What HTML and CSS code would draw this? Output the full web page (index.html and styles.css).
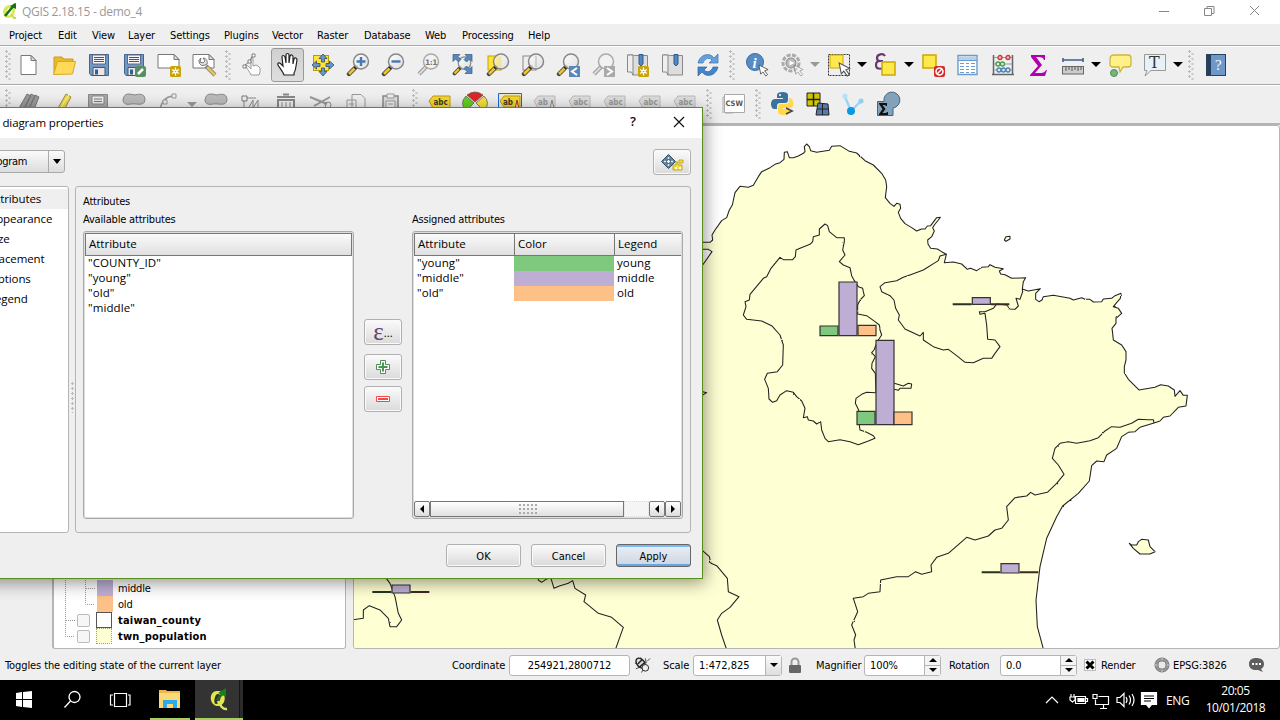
FILE: index.html
```html
<!DOCTYPE html>
<html lang="en">
<head>
<meta charset="utf-8">
<title>QGIS 2.18.15 - demo_4</title>
<link rel="stylesheet" href="styles.css">
</head>
<body>
<svg class="defs" width="0" height="0">
  <defs>
    <linearGradient id="lens" x1="0" y1="0" x2="1" y2="1"><stop offset="0" stop-color="#fff"/><stop offset="1" stop-color="#dcdcdc"/></linearGradient>
    <filter id="rough" x="-5%" y="-5%" width="110%" height="110%"><feTurbulence type="fractalNoise" baseFrequency=".06" numOctaves="2" seed="4" result="n"/><feDisplacementMap in="SourceGraphic" in2="n" scale="5" xChannelSelector="R" yChannelSelector="G"/></filter>
    <symbol id="mag" viewBox="0 0 24 24"><path d="M10 14 3 21" stroke="#444" stroke-width="4.4" stroke-linecap="round"/><path d="M9.500 14.500 3 21" stroke="#f2c32c" stroke-width="2.600"/><path d="m11 13-2.500 2.500" stroke="#222" stroke-width="3"/><circle cx="15" cy="8.500" r="7.500" fill="url(#lens)" fill-opacity=".85" stroke="#888" stroke-width="1.500"/></symbol>
    <symbol id="maggray" viewBox="0 0 24 24"><path d="M10 14 3 21" stroke="#999" stroke-width="4"/><path d="M9.500 14.500 3 21" stroke="#ddd" stroke-width="2"/><circle cx="15" cy="8.500" r="7.500" fill="#f2f2f2" stroke="#aaa" stroke-width="1.500"/></symbol>
    <symbol id="floppy" viewBox="0 0 24 24"><path d="M2.500 1.500h19v21H4l-1.500-2z" fill="#6f98c6" stroke="#44658c"/><path d="M5.500 2h13v9h-13z" fill="#f5f5f5" stroke="#668"/><path d="M7 4.500h10M7 6.500h10M7 8.500h10" stroke="#555"/><path d="M6 14.500h12v8H6z" fill="#e8e8e8" stroke="#456"/><path d="M8 16.500h3v5H8z" fill="#345f92"/></symbol>
    <symbol id="star" viewBox="0 0 11 11"><rect width="11" height="11" rx="1.500" fill="#c9a30a"/><path d="M5.500 1.500v8M2 3.500l7 4M9 3.500l-7 4" stroke="#fff" stroke-width="1.300"/><circle cx="5.500" cy="5.500" r="2" fill="#fff"/><circle cx="5.500" cy="5.500" r=".8" fill="#c9a30a"/></symbol>
    <symbol id="cursor" viewBox="0 0 12 14"><path d="m1 1 2 10 2.300-2.500 3.200 4.500 2-1.500-3.200-4.200L11 6z" fill="#fff" stroke="#555"/></symbol>
    <symbol id="book" viewBox="0 0 24 24"><path d="M1.500 2h5v20h15V2.500h-13L7 2" fill="#ddd" stroke="#888"/><path d="M1.500 2v17h4l1.500 3V2z" fill="#eee" stroke="#888"/><path d="M13 1.500h4V11l-2 2-2-2z" fill="#5586c0" stroke="#2d5b94"/></symbol>
    <symbol id="tag" viewBox="0 0 24 24"><path d="m1 9 4-5h17v12H5z" fill="#ddd" stroke="#bbb"/></symbol>
  </defs>
</svg>
<div class="desktop">
  <header class="titlebar">
    <svg class="logo" viewBox="0 0 16 18"><path d="M8 3C3 3 1 7 1 10s2 6 5 6c5 0 7-4 7-8S11 3 8 3m0 3c2 0 3 1 2 4s-3 4-4 3-1-3-1-4 1-3 3-3" fill="#dbe75b" fill-rule="evenodd"/><path d="m9 12 3 4h2" stroke="#cddb40" stroke-width="2" fill="none"/><path d="M3 14 13 2" stroke="#14721c" stroke-width="2.500"/><path d="m8 4 6-3 0 6z" fill="#14721c"/></svg>
    <span class="wtitle">QGIS 2.18.15 - demo_4</span>
    <svg class="wctl" viewBox="0 0 120 24" fill="none" stroke="#888"><path d="M9 11.500h10M54.500 8.500h7v7h-7zM57 8V6.500h7v7H62M100 6l9 9M109 6l-9 9"/></svg>
  </header>
  <nav class="menubar"><span style="width:49px">Project</span><span style="width:34px">Edit</span><span style="width:36px">View</span><span style="width:42px">Layer</span><span style="width:54px">Settings</span><span style="width:48px">Plugins</span><span style="width:45px">Vector</span><span style="width:47px">Raster</span><span style="width:61px">Database</span><span style="width:37px">Web</span><span style="width:66px">Processing</span><span>Help</span></nav>

  <div class="toolbar">
    <i class="grip first"></i>
    <span class="tool"><svg viewBox="0 0 24 24"><path d="M4 2.500h10l5 5v14H4z" fill="#fff" stroke="#777"/><path d="M14 2.500v5h5z" fill="#ddd" stroke="#777"/></svg></span>
    <span class="tool"><svg viewBox="0 0 24 24"><path d="M2 21V4h8l2 2h9v4" fill="#e9b927" stroke="#c99b20"/><path d="m1.500 21.500 4-13h18l-3 12.500z" fill="#ffda58" stroke="#d9a72c"/></svg></span>
    <span class="tool"><svg><use href="#floppy"/></svg></span>
    <span class="tool"><svg viewBox="0 0 24 24"><use href="#floppy" width="24" height="24"/><rect x="13" y="13" width="11" height="11" rx="2" fill="#55915e"/><path d="m16 21 5-5" stroke="#fff" stroke-width="2.500"/></svg></span>
    <span class="tool"><svg viewBox="0 0 24 24"><path d="M1 1.500h16l5 5V15H1z" fill="#fff" stroke="#777"/><path d="M17 1.500v5h5z" fill="#ddd" stroke="#777"/><use href="#star" x="13" y="13" width="11" height="11"/></svg></span>
    <span class="tool"><svg viewBox="0 0 24 24"><path d="M1 1.500h16l5 5V15H1z" fill="#fff" stroke="#777"/><path d="M17 1.500v5h5z" fill="#ddd" stroke="#777"/><path d="m14 13 9 9" stroke="#777" stroke-width="4"/><path d="m15 14 8 8" stroke="#e6c753" stroke-width="2.500"/><path d="M9 5a4 4 0 1 0 4 7l2-1c1-3-1-6-4-6l2 3-2 2-3-1z" fill="#e4e4e4" stroke="#777"/></svg></span>
    <i class="grip"></i>
    <span class="tool"><svg viewBox="0 0 24 24"><path d="M10 22c-1-3-4-6-5-9 0-1 1-1 2 0l3 3V6c0-2 2-2 2 0v7l3-1 2 1 2 2v4l-1 3z" fill="#fff" stroke="#999"/><path d="m3 13 6-5 3-6" stroke="#777" fill="none"/><path d="M11 1h3v3h-3zM7 7h3v3H7zM2 12h3v3H2z" stroke="#555" fill="#fff" stroke-width=".7"/></svg></span>
    <span class="tool pressed"><svg viewBox="0 0 24 24"><path d="M8 22c-1-3-5-8-6-10s1-3 3-1l2 2L6 4c0-2 2-2 3 0l1 6V2c0-2 3-2 3 0v8l1-7c1-2 3-1 3 1v7l1-5c1-2 3-1 3 1-1 5-1 10-3 13v2z" fill="#fff" stroke="#222" stroke-width="1.200"/></svg></span>
    <span class="tool"><svg viewBox="0 0 24 24"><rect x="2.500" y="2.500" width="15" height="15" fill="#ffe338" stroke="#b99c00"/><path d="M12 1 8 5.500h2.500V9h3V5.500H16zM12 23l-4-4.500h2.500V15h3v3.500H16zM1 12l4.500-4v2.500H9v3H5.500V16zM23 12l-4.500-4v2.500H15v3h3.500V16z" fill="#6c98c8" stroke="#294d79" stroke-width=".8"/></svg></span>
    <span class="tool"><svg viewBox="0 0 24 24"><use href="#mag" width="24" height="24"/><path d="M15 4v9M10.500 8.500h9" stroke="#4778ae" stroke-width="2.400"/></svg></span>
    <span class="tool"><svg viewBox="0 0 24 24"><use href="#mag" width="24" height="24"/><path d="M10.500 8.500h9" stroke="#4778ae" stroke-width="2.400"/></svg></span>
    <span class="tool"><svg viewBox="0 0 24 24"><use href="#maggray" width="24" height="24"/><text x="9" y="11.500" class="i-one">1:1</text></svg></span>
    <span class="tool"><svg viewBox="0 0 24 24"><use href="#mag" x="1" y="3" width="20" height="20"/><path d="M2 1.500h7L7 3.500l3 3L7.500 9l-3-3L2 8.500zM21 1.500h-7l2 2-3 3L15.500 9l3-3L21 8.500zM21 20.500h-7l2-2-3-3 2.500-2.500 3 3 2.500-2.500z" fill="#5b88ba" stroke="#315c8a" stroke-width=".7"/></svg></span>
    <span class="tool"><svg viewBox="0 0 24 24"><rect x="2" y="3" width="13" height="14" fill="#ffe338" stroke="#c8a300"/><use href="#mag" width="24" height="24"/><path d="M11 3.500h4v10h-4q-3-5 0-10" fill="#f3e27a" opacity=".6"/></svg></span>
    <span class="tool"><svg viewBox="0 0 24 24"><rect x="2" y="3" width="13" height="14" fill="#eee" stroke="#888"/><use href="#mag" width="24" height="24"/><path d="M15 3v11" stroke="#bbb"/></svg></span>
    <span class="tool"><svg viewBox="0 0 24 24"><use href="#mag" width="24" height="24"/><rect x="13" y="13" width="11" height="11" fill="#5888bd"/><path d="m21 15-5 3.500 5 3.500" fill="none" stroke="#fff" stroke-width="2"/></svg></span>
    <span class="tool"><svg viewBox="0 0 24 24"><use href="#maggray" width="24" height="24"/><rect x="13" y="13" width="11" height="11" fill="#aaa"/><path d="m16 15 5 3.500-5 3.500" fill="none" stroke="#fff" stroke-width="2"/></svg></span>
    <span class="tool"><svg viewBox="0 0 24 24"><use href="#book" width="24" height="24"/><use href="#star" x="12" y="13" width="11" height="11"/></svg></span>
    <span class="tool"><svg><use href="#book"/></svg></span>
    <span class="tool"><svg viewBox="0 0 24 24"><path d="M2 10C4 1 14-1 18 5l4-4v9h-9l3-3c-4-4-8 0-9 3z" fill="#67a1dc" stroke="#3772b1" stroke-width=".7"/><path d="M22 14c-2 9-12 11-16 5l-4 4v-9h9l-3 3c4 4 8 0 9-3z" fill="#4385c7" stroke="#2b64a3" stroke-width=".7"/></svg></span>
    <i class="grip"></i>
    <span class="tool"><svg viewBox="0 0 24 24"><circle cx="10" cy="9" r="8.500" fill="#568bc4" stroke="#3e6da0"/><text x="7.500" y="14.500" class="i-info">i</text><use href="#cursor" x="13" y="11" width="11" height="13"/></svg></span>
    <span class="tool"><svg viewBox="0 0 24 24"><circle cx="11" cy="10" r="8" fill="#eee" stroke="#aaa" stroke-width="3" stroke-dasharray="4 1.500"/><circle cx="11" cy="10" r="5" fill="#bbb" stroke="#888"/><path d="m9.500 7.500 5 2.500-5 2.500z" fill="#fff"/><g opacity=".5"><use href="#cursor" x="13" y="11" width="11" height="13"/></g></svg></span>
    <b class="drop dim"></b>
    <span class="tool"><svg viewBox="0 0 24 24"><rect x="1.500" y="1.500" width="21" height="21" fill="none" stroke="#333" stroke-dasharray="2 1"/><path d="M3 2h13v13H3z" fill="#ffe84d" stroke="#caa900"/><use href="#cursor" x="11" y="9" width="13" height="15"/></svg></span>
    <b class="drop"></b>
    <span class="tool"><svg viewBox="0 0 24 24"><path d="M11 3C9 0 3 1 3 5c0 2 1 3 3 3-3 0-4 2-4 4 0 5 8 5 9 0M6 8h3" fill="none" stroke="#66386f" stroke-width="2.200"/><rect x="8" y="9" width="13" height="13" fill="#ffe84d" stroke="#caa900" stroke-width="1.500"/></svg></span>
    <b class="drop"></b>
    <span class="tool"><svg viewBox="0 0 24 24"><path d="M2 2h13v13H2z" fill="#ffe84d" stroke="#caa900" stroke-width="1.500"/><rect x="13" y="13" width="11" height="11" rx="2" fill="#d7282c"/><circle cx="18.500" cy="18.500" r="3.500" fill="none" stroke="#fff" stroke-width="1.500"/><path d="m16 21 5-5" stroke="#fff" stroke-width="1.500"/></svg></span>
    <span class="tool"><svg viewBox="0 0 24 24"><path d="M2 2.500h19v19H2z" fill="#fff" stroke="#6b9ccb" stroke-width="1.400"/><path d="M3 3.500h17v4H3z" fill="#b5d1ec"/><path d="M2 7.500h19M4 10.500h4M10 10.500h3M15 10.500h4M4 13.500h4M10 13.500h3M15 13.500h4M4 16.500h4M10 16.500h3M15 16.500h4M4 19.500h4M10 19.500h3M15 19.500h4" stroke="#6b9ccb"/></svg></span>
    <span class="tool"><svg viewBox="0 0 24 24"><path d="M2.500 2v19M21.500 2v19M1 21.500h22" stroke="#666" stroke-width="1.500"/><path d="M3 4.500h18M3 11h18M3 17h18" stroke="#999"/><g stroke-width="1.300"><g fill="#f6b8b8" stroke="#c63b3b"><circle cx="9" cy="4.500" r="2"/><circle cx="17" cy="4.500" r="2"/></g><g fill="#d7f4d6" stroke="#4a9a4e"><circle cx="7" cy="11" r="2"/><circle cx="11.500" cy="11" r="2"/></g><g fill="#d8e7f6" stroke="#4d82b5"><circle cx="8" cy="17" r="2"/><circle cx="12.500" cy="17" r="2"/><circle cx="17" cy="17" r="2"/></g></g></svg></span>
    <span class="tool"><svg viewBox="0 0 24 24"><path d="M5 2h14v5h-1c-1-3-3-3-8-3l6 8-7 8h5c4 0 5-1 6-3h1l-2 6H4v-1l8-9-7-9z" fill="#b000af"/></svg></span>
    <span class="tool"><svg viewBox="0 0 24 24"><path d="M1.500 7h21M2 5v4M22 5v4" stroke="#3f608c" stroke-width="1.600"/><rect x="1.500" y="13.500" width="21" height="7.500" fill="#ccc" stroke="#666"/><path d="M5 14v4M8 14v3M11 14v4M14 14v3M17 14v4M20 14v3" stroke="#555"/></svg></span>
    <b class="drop"></b>
    <span class="tool"><svg viewBox="0 0 24 24"><path d="M6 2h14q3 0 3 3v6q0 3-3 3h-5l-3 5-1-5H5q-3 0-3-3V6q0-4 4-4" fill="#fff08a" stroke="#cdb53b" stroke-width="1.300"/><circle cx="6" cy="20" r="3.500" fill="#76b47b" stroke="#528a57"/></svg></span>
    <span class="tool"><svg viewBox="0 0 24 24"><path d="M1.500 1.500h21v16H8L2 23l2-5.500H1.500z" fill="#e8f1f6" stroke="#999"/><text x="6" y="15" class="i-t">T</text></svg></span>
    <b class="drop"></b>
    <i class="grip"></i>
    <span class="tool"><svg viewBox="0 0 24 24"><rect x="2.500" y="1.500" width="19" height="21" fill="#6c98cb" stroke="#26435f"/><path d="M3 2h4v20H3z" fill="#263f56"/><text x="11" y="17" class="i-help">?</text></svg></span>
  </div>

  <div class="toolbar second">
    <i class="grip first"></i>
    <span class="tool"><svg viewBox="0 0 24 24"><path d="M1 18 10 2l4 2-8 15M6 19 14 2l4 2-7 15M11 19l7-16 4 2-6 15" fill="#999" stroke="#777"/></svg></span>
    <span class="tool"><svg viewBox="0 0 24 24"><path d="m5 18 9-16 5 3-8 15-6 3z" fill="#efd94d" stroke="#9e8c36"/><path d="m8 17 9-14" stroke="#fff6b4"/></svg></span>
    <span class="tool"><svg viewBox="0 0 24 24"><path d="M1.500 2.500h19v19h-19z" fill="#aaa" stroke="#888"/><path d="M5 4h12v8H5z" fill="#eee" stroke="#888"/><path d="M7 7h8M7 9.500h8" stroke="#777"/></svg></span>
    <span class="tool"><svg viewBox="0 0 24 24"><path d="M1 8C2 0 8 2 13 3c7-2 10 0 10 5-1 7-9 3-14 4-4 1-8 0-8-4M13 18h10" fill="#bbb" stroke="#888"/></svg></span>
    <span class="tool"><svg viewBox="0 0 24 24"><path d="M3 18Q5 5 16 4" fill="none" stroke="#999" stroke-width="1.500"/><path d="M15 2h4v4h-4zM6 8h4v4H6z" fill="#eee" stroke="#999"/></svg></span>
    <b class="drop dim"></b>
    <span class="tool"><svg viewBox="0 0 24 24"><path d="M1 8C2 0 8 2 13 3c7-2 10 0 10 5-1 7-9 3-14 4-4 1-8 0-8-4M13 18h10" fill="#bbb" stroke="#888"/></svg></span>
    <span class="tool"><svg viewBox="0 0 24 24"><path d="M5 18V6h12M9 17l5-9 0 8 5-8v8" fill="none" stroke="#888"/><path d="M3 4h5v5H3z" fill="#eee" stroke="#777"/></svg></span>
    <span class="tool"><svg viewBox="0 0 24 24"><path d="M4 8h16v14H4zM3 5h18M9 2.500h6" fill="none" stroke="#888" stroke-width="2"/><path d="M8 10v10M12 10v10M16 10v10" stroke="#888"/></svg></span>
    <span class="tool"><svg viewBox="0 0 24 24"><path d="m1 5 17 7M5 14l16-9" stroke="#999" stroke-width="2"/><circle cx="19" cy="13" r="3" fill="none" stroke="#888"/></svg></span>
    <span class="tool"><svg viewBox="0 0 24 24"><path d="M8 2.500h9l4 4V20H8z M3 8h9v12H3zM5 12h5" fill="#eee" stroke="#999"/></svg></span>
    <span class="tool"><svg viewBox="0 0 24 24"><path d="M4 4h15v18H4z" fill="#ddd" stroke="#888" stroke-width="1.500"/><path d="M8 2h7v4H8zM7 9h9v9H7zM9 12h5" fill="#eee" stroke="#999"/></svg></span>
    <i class="grip"></i>
    <span class="tool"><svg viewBox="0 0 24 24"><path d="m1 9 4-5h17v12H5z" fill="#f4d82b" stroke="#b99a1b"/><text x="5.500" y="12.500" class="i-abc">abc</text></svg></span>
    <span class="tool"><svg viewBox="0 0 24 24"><g stroke="#555" stroke-width=".7"><path d="M12 10 4 3q8-6 16 0z" fill="#e32424"/><path d="M11 11 3 4q-7 7 0 15z" fill="#64d11d"/><path d="m13 11 8-7q7 7 0 15z" fill="#f5df3e"/></g></svg></span>
    <span class="tool"><svg viewBox="0 0 24 24"><path d="M.5 1.500h23v21H.5z" fill="#eee8c8" stroke="#1c68d4"/><path d="m2 9 4-5h16v11H6z" fill="#f4d82b" stroke="#b99a1b"/><text x="5" y="12.500" class="i-abc">ab</text><path d="m17 17 2-9 2 9z" fill="#ddd" stroke="#a32"/></svg></span>
    <span class="tool gray"><svg viewBox="0 0 24 24"><use href="#tag" width="24" height="24"/><text x="5" y="12.500" class="i-abc">ab</text><path d="m17 17 2-9 2 9z" fill="#eee" stroke="#888"/></svg></span>
    <span class="tool gray"><svg viewBox="0 0 24 24"><use href="#tag" width="24" height="24"/><text x="5.500" y="12.500" class="i-abc">abc</text></svg></span>
    <span class="tool gray"><svg viewBox="0 0 24 24"><use href="#tag" width="24" height="24"/><text x="5.500" y="12.500" class="i-abc">abc</text></svg></span>
    <span class="tool gray"><svg viewBox="0 0 24 24"><use href="#tag" width="24" height="24"/><text x="5.500" y="12.500" class="i-abc">abc</text></svg></span>
    <span class="tool gray"><svg viewBox="0 0 24 24"><use href="#tag" width="24" height="24"/><text x="5.500" y="12.500" class="i-abc">abc</text></svg></span>
    <i class="grip"></i>
    <span class="tool"><svg viewBox="0 0 24 24"><path d="M1 21V5h2v16h8" stroke="#aaa" fill="none"/><path d="M2.500 2.500h20v18h-20z" fill="#fff" stroke="#aaa"/><text x="3.500" y="14" class="i-csw">CSW</text></svg></span>
    <i class="grip"></i>
    <span class="tool"><svg viewBox="0 0 24 24"><path d="M11.500 0C8 0 6 1 6 3v3h6v1H4c-3 0-4 3-4 5s1 5 3 5h3v-3c0-2 1-3 3-3h5c2 0 3-1 3-3V3c0-2-2-3-5.500-3" fill="#39719f"/><path d="M12.500 23c3.500 0 5.500-1 5.500-3v-3h-6v-1h7c3 0 4-3 3-7-1-2-2-3-4-3v3c0 2-1 3-3 3h-5c-2 0-3 1-3 3v5c0 2 2 3 5.500 3" fill="#ffd84b"/><circle cx="9" cy="3" r="1" fill="#fff"/><path d="m15 16 6 3-6 3" fill="none" stroke="#444" stroke-width="1.700"/></svg></span>
    <span class="tool"><svg viewBox="0 0 24 24"><path d="M1 1h13v13H1z" fill="#d1c400" stroke="#222"/><path d="M7.500 1v13M1 7.500h13" stroke="#222" stroke-width="1.500"/><path d="m12 11 10 1 1 11H10z" fill="#557cab" stroke="#222"/><path d="M16.500 11v12M11 17h11" stroke="#222"/></svg></span>
    <span class="tool"><svg viewBox="0 0 24 24"><path d="m4 5 6 14L20 9" fill="none" stroke="#9bd5f4" stroke-width="2.400"/><circle cx="4" cy="4" r="2.600" fill="#b8e0f7"/><circle cx="20" cy="9" r="2.600" fill="#8fd0f4"/><circle cx="10" cy="19" r="4" fill="#0d99df"/></svg></span>
    <span class="tool"><svg viewBox="0 0 24 24"><path d="M1.500 9.500H8A8 8 0 1 1 17 16v7.500H1.500z" fill="#81a2b8" stroke="#43657b"/><path d="M3 11h8v3h-1q0-1-2-1H6.500l3 4-3 4H9q2 0 2-1h1v3H3v-1l3.500-5L3 12z" fill="#111"/></svg></span>
  </div>

  <main class="workspace">
    <aside class="layers">
      <div class="row sub"><svg class="twig" viewBox="0 0 43 16"><path d="M11.500 0v16M31.500 0v16M32 8.500h9"/></svg><i class="swatch middle"></i><span>middle</span></div>
      <div class="row sub"><svg class="twig" viewBox="0 0 43 16"><path d="M11.500 0v16M31.500 0v8.500H41"/></svg><i class="swatch old"></i><span>old</span></div>
      <div class="row"><svg class="twig short" viewBox="0 0 22 16"><path d="M11.500 0v16M12 8.500h9"/></svg><i class="check"></i><i class="swatch county"></i><b>taiwan_county</b></div>
      <div class="row"><svg class="twig short" viewBox="0 0 22 16"><path d="M11.500 0v8.500H21"/></svg><i class="check"></i><i class="swatch pop"></i><b>twn_population</b></div>
    </aside>
    <section class="mapframe">
      <svg class="map" viewBox="354 126 925 522">
        <g transform="translate(690 125) scale(.33333)" fill="none" stroke="#222" stroke-width="3.200" stroke-linejoin="round">
          <g filter="url(#rough)">
          <path fill="#ffffd4" d="M-1200 352 38 352 60 352 68 345 66 330 75 315 95 287 110 278 118 255 127 240 135 203 150 184 175 187 190 181 205 155 215 140 240 128 255 118 270 113 282 103 283 82 292 80 298 98 310 98 325 93 340 85 345 80 343 65 350 57 358 65 362 77 380 82 418 76 425 64 450 62 478 79 500 84 525 107 550 120 575 145 587 165 590 185 586 218 600 235 612 244 620 235 630 238 632 250 625 262 632 280 645 296 665 308 680 318 695 312 705 312 712 303 722 302 740 278 751 277 745 285 733 300 728 308 733 318 725 335 713 345 714 357 722 370 742 372 755 380 769 388 763 413 790 411 815 417 832 433 842 430 860 437 875 427 895 425 900 419 915 427 940 431 928 438 932 447 945 449 965 460 1007 458 1000 470 997 492 1015 498 1051 491 1037 505 1037 523 1047 530 1056 525 1060 515 1090 511 1140 520 1150 525 1175 518 1185 523 1200 523 1210 531 1235 530 1240 522 1265 520 1275 512 1293 505 1291 520 1280 533 1270 545 1285 550 1295 565 1278 580 1278 595 1266 610 1268 625 1270 645 1295 660 1308 680 1308 705 1303 725 1303 743 1315 763 1347 795 1395 787 1412 779 1435 783 1453 795 1455 814 1470 797 1480 811 1492 811 1488 843 1465 847 1440 873 1420 877 1410 888 1392 894 1350 907 1335 920 1315 922 1295 935 1280 970 1250 990 1242 1010 1220 1008 1205 1022 1198 1068 1165 1105 1118 1143 1100 1175 1070 1240 1050 1325 1038 1425 1042 1505 1065 1590 H-1200z"/>
          <path fill="#fff" d="M20 373H55L66 380 38 420 20 440z"/>
          <path d="M405 297 413 302 418 320 428 328 440 338 463 338 463 350 458 375 465 390 448 410 460 420 480 428 485 452 493 467 505 485 518 490 520 500 523 512 510 525 503 540 503 567 530 572 555 590 568 600 570 615 575 630 565 645 558 660 552 675 545 683 556 695 546 715 545 730 556 745 558 803 530 802 515 808 498 820 496 835 506 855 508 900 510 915 530 922 550 932 555 940 535 948 505 959 480 950 450 944 415 950 405 940 395 915 392 890 380 897 370 888 355 885 352 875 340 878 345 850 335 828 320 815 310 802 290 797 270 810 260 827 248 832 237 822 235 790 224 763 232 745 262 740 278 720 280 660 270 630 245 602 215 588 170 583 160 570 168 545 165 530 178 525 180 508 220 460 230 455 243 430 270 397 280 404 308 404 316 395 318 375 330 370 360 358 368 350 370 335 388 330 388 312zM613 775 640 783 655 775 665 777 663 790 630 790 625 796 613 793M30 798 50 803 38 810"/>
          <path d="M769 388 750 393 745 407 700 435 660 450 640 457 620 467 585 473 570 485 575 500 600 512 612 525 617 550 628 570 625 585 645 612 690 633 700 622 700 645 730 665 760 675 775 673 800 692 825 712 850 713 880 700 905 700 915 685 930 665 915 645 893 643 890 600 885 565 870 568 868 560 885 560 910 550 920 537 950 540 960 552 975 553 985 543 978 520 990 523 998 500 997 492"/>
          <path d="M1392 894 1390 884 1375 884 1345 883 1325 895 1290 907 1265 905 1245 918 1225 938 1200 947 1160 955 1135 950 1110 955 1095 970 1087 1000 1105 1020 1122 1048 1100 1075 1072 1102 1035 1110 1022 1102 1010 1113 975 1118 950 1145 955 1185 935 1210 915 1215 895 1233 855 1245 830 1237 775 1285 740 1297 723 1320 725 1340 695 1348 677 1340 655 1355 620 1355 572 1365 570 1400 535 1405 520 1415 490 1420 503 1460 485 1500 497 1530 492 1545 497 1580"/>
          <path d="M30 1270 58 1295 63 1315 80 1322 112 1360 115 1400 147 1415 120 1447 95 1465 82 1485 95 1530 112 1580M-455 1350-455 1365-445 1372-432 1363-418 1357-408 1390-392 1383-365 1375-352 1367-345 1390-313 1410-318 1430-275 1465-235 1477-200 1507-210 1535-226 1580M-915 1355-900 1375-885 1415-875 1465-865 1485-880 1505-900 1505-905 1480-930 1455-962 1442-980 1455-980 1480-1015 1485"/>
          <path fill="#ffffd4" d="m943 345 5-10 12-1v8l-12 7zM1318 1255 1325 1260 1340 1260 1345 1250 1355 1243 1375 1245 1380 1265 1395 1280 1380 1287 1350 1287 1330 1270z"/>
          </g>
          <g stroke="#333" stroke-width="3.600" stroke-linejoin="miter">
            <path fill="#7fc97f" d="M390 603h54v29h-54zM501 859h54v40h-54z"/>
            <path fill="#beaed4" d="M447 471h54v161h-54zM558 646h54v253h-54zM847 518h54v20h-54zM933 1316h54v28h-54zM-894 1380h54v24h-54z"/>
            <path fill="#fdc086" d="M504 601h54v31h-54zM612 861h54v38h-54z"/>
            <path stroke-width="6" stroke="#27351f" d="M788 538h57M875 1342h56M-953 1401h57"/>
            <path stroke-width="6" stroke="#3d2a22" d="M903 538h55M989 1342h56M-838 1401h56"/>
          </g>
        </g>
      </svg>
    </section>
  </main>

  <footer class="status">
    <span class="hint">Toggles the editing state of the current layer</span>
    <span class="lbl-coord">Coordinate</span>
    <span class="field coord">254921,2800712</span>
    <svg class="bug" viewBox="0 0 18 18"><path d="m3 3 11 11M1 7l4 1M7 1l2 4M2 13l5-2M12 2l1 5M10 13l-2 4M14 5l3-3" stroke="#444"/><ellipse cx="7" cy="7" rx="4" ry="6" transform="rotate(-40 7 7)" fill="#ddd" stroke="#222" stroke-width="1.500"/><path d="m4 8 5-5M6 11l6-5" stroke="#222" stroke-width="1.500"/><circle cx="12" cy="12" r="3.500" fill="#eee" stroke="#222"/></svg>
    <span class="lbl-scale">Scale</span>
    <span class="field scale">1:472,825<i class="combo"><b class="drop"></b></i></span>
    <svg class="lock" viewBox="0 0 14 17"><path d="M3.500 9V5a3.500 3.500 0 0 1 7 0v4" fill="none" stroke="#999" stroke-width="2"/><rect x="1" y="8" width="12" height="8" rx="1" fill="#666"/></svg>
    <span class="lbl-mag">Magnifier</span>
    <span class="field magn">100%<i class="spin"><b class="up"></b><b class="drop"></b></i></span>
    <span class="lbl-rot">Rotation</span>
    <span class="field rot">0.0<i class="spin"><b class="up"></b><b class="drop"></b></i></span>
    <svg class="render" viewBox="0 0 12 12"><rect x=".5" y=".5" width="11" height="11" fill="#fff" stroke="#bbb"/><path d="m2.500 2.500 7 7M9.500 2.500l-7 7" stroke="#000" stroke-width="3"/></svg>
    <span class="lbl-render">Render</span>
    <svg class="globe" viewBox="0 0 16 16"><circle cx="8" cy="8" r="7" fill="#999" stroke="#777"/><path d="M8 1v14M1 8h14" fill="none" stroke="#ccc"/><rect x="4" y="4" width="8" height="8" rx="3" fill="#e8e8e8" stroke="#777"/></svg>
    <span class="lbl-epsg">EPSG:3826</span>
    <svg class="chat" viewBox="0 0 17 16"><path d="M8 1c5 0 8 2 8 6 0 2-1 4-3 5l2 3-5-2H8c-4 0-7-2-7-6s3-6 7-6" fill="#5e5e5e"/><path d="M4 6h2v2H4zM7.500 6h2v2h-2zM11 6h2v2h-2z" fill="#fff"/></svg>
  </footer>

  <footer class="taskbar">
    <span class="task start"><svg viewBox="0 0 24 24"><path d="m4 5 6-1v7H4zM11 4l9-1v8h-9zM4 12h6v7l-6-1zM11 12h9v8l-9-1z" fill="#fff"/></svg></span>
    <span class="task"><svg viewBox="0 0 24 24" fill="none" stroke="#fff" stroke-width="1.300"><circle cx="14.500" cy="9" r="5.500"/><path d="m10.500 13-6 6.500"/></svg></span>
    <span class="task"><svg viewBox="0 0 24 24" fill="none" stroke="#fff" stroke-width="1.200"><path d="M6.500 5.500h12v13h-12zM5 7H2.500v10H5M20 7h2v10h-2"/></svg></span>
    <span class="task open"><svg viewBox="0 0 24 24"><path d="M1 4h7l1 1h13v16H1z" fill="#fcd878"/><path d="M1 6h21V4H9L8 3H1z" fill="#edb84b"/><path d="M5 21v-8h14v8h-4v-4H9v4z" fill="#29adea"/></svg></span>
    <span class="task open active"><svg viewBox="0 0 24 24"><path d="M10 4C5 4 3 9 4 13s4 6 7 6c6 0 8-7 6-11s-4-4-7-4m1 3c3 0 3 3 2 6s-2 4-4 4-2-4-1-7 2-3 3-3" fill="#dfe94e" fill-rule="evenodd"/><path d="M11 14q4 9 9 8" stroke="#dbe666" stroke-width="2.500" fill="none"/><path d="m10 13 7-8" stroke="#236b19" stroke-width="2.400"/><path d="m11 6 8-5 0 9z" fill="#15811b"/></svg></span>
    <div class="tray">
      <svg class="trayicons" viewBox="0 0 120 24" fill="none" stroke="#fff" stroke-width="1.200"><path d="m4 15 6-6 6 6"/><path d="M33.500 8.500h10v7h-10zM44 10.500h1.500v3H44M29 6v3M32 6v3M28 9h5v3l-2.500 2-2.500-2z"/><path fill="#fff" d="M36 10.500h6v3h-6z"/><path d="M56.500 8.500h10v8h-13v-5M61.500 17v3M58 20.500h7M51 6.500h4v4h-4z"/><path d="M75 9.500h3l4-4v13l-4-4h-3zM84 9q2 3 0 6M87 7.500q3 4.500 0 9M90 6q4 6 0 12"/><path fill="#fff" d="M99.500 4.500h15v12h-5l-2.500 3-2.500-3h-5z"/><path stroke="#000" d="M102 8h10M102 10.500h10M102 13h7"/></svg>
      <span class="lang">ENG</span>
      <span class="clock">20:05<br>10/01/2018</span>
    </div>
  </footer>

  <div class="dialog">
    <div class="dtitle"><span>r diagram properties</span><svg viewBox="0 0 70 30"><text x="15" y="18" class="i-q">?</text><path d="m59 9 10 10M69 9 59 19" stroke="#111" stroke-width="1.200"/></svg></div>
    <div class="dbody">
      <div class="dtop"><span class="histogram"><span>Histogram</span><i><b class="drop"></b></i></span>
        <button class="btn small"><svg viewBox="0 0 24 18"><path d="m8.500 1.500 7 7-7 7-7-7z" fill="#5d829e" stroke="#304f67"/><path d="M8.500 4v9M4 8.500h9" stroke="#dde6ec" stroke-width="1.500"/><circle cx="8.500" cy="8.500" r="2" fill="#f3f3f3" stroke="#304f67"/><path d="M13 12h3V9h2v3h4v5h-9zM19 7h4v3h-4z" fill="#f4dc3e" stroke="#c8a920"/><path d="M15 14h2v2h-2zM19 14h2v2h-2z" fill="#fff"/></svg></button></div>
      <div class="dmain">
        <ul class="pages"><li class="on">Attributes</li><li>Appearance</li><li>Size</li><li>Placement</li><li>Options</li><li>Legend</li></ul>
        <i class="splitter"></i>
        <div class="group">
          <div class="gtitle">Attributes</div>
          <div class="cols">
            <div class="left"><label>Available attributes</label>
              <div class="table"><div class="thead"><span>Attribute</span></div><p>"COUNTY_ID"</p><p>"young"</p><p>"old"</p><p>"middle"</p></div></div>
            <div class="mid"><button class="btn small"><em>ε</em>...</button><button class="btn small gap"><svg viewBox="0 0 16 16"><path d="M5.500 1.500h5v4h4v5h-4v4h-5v-4h-4v-5h4z" fill="#fff" stroke="#4f9154"/><path d="M8 3.500v9M3.500 8h9" stroke="#4f9154" stroke-width="2"/></svg></button><button class="btn small"><svg viewBox="0 0 16 16"><path d="M1.500 5.500h13v5h-13z" fill="#fff" stroke="#ef4b4b"/><path d="M3 8h10" stroke="#ef4b4b" stroke-width="2"/></svg></button></div>
            <div class="right"><label>Assigned attributes</label>
              <div class="table"><div class="thead three"><span>Attribute</span><span>Color</span><span>Legend</span></div>
                <div class="trow"><span>"young"</span><i class="c-young"></i><span>young</span></div>
                <div class="trow"><span>"middle"</span><i class="c-mid"></i><span>middle</span></div>
                <div class="trow"><span>"old"</span><i class="c-old"></i><span>old</span></div>
                <div class="hscroll"><i class="sb"><b class="la"></b></i><i class="thumb"><u></u></i><i class="track"></i><i class="sb"><b class="la"></b></i><i class="sb"><b class="ra"></b></i></div>
              </div></div>
          </div>
        </div>
      </div>
      <div class="actions"><button class="btn">OK</button><button class="btn">Cancel</button><button class="btn default">Apply</button></div>
    </div>
  </div>
</div>
</body>
</html>
```
FILE: styles.css
```css
* { box-sizing: border-box; }
body { margin: 0; font: 11px "DejaVu Sans Condensed", "DejaVu Sans", sans-serif; color: #000; background: #efefef; }
i, em { font-style: normal; }
.defs { position: absolute; }
.desktop { position: relative; width: 1280px; height: 720px; overflow: hidden; display: flex; flex-direction: column; background: #efefef; }
.titlebar { height: 24px; background: #fff; display: flex; align-items: center; flex: none; }
.logo { width: 16px; height: 18px; margin: 0 4px 2px 2px; }
.wtitle { font: 12px "Open Sans", sans-serif; letter-spacing: -.3px; color: #999; flex: 1; padding-bottom: 2px; }
.wctl { width: 120px; height: 24px; margin-right: 10px; }
.menubar { height: 22px; flex: none; display: flex; align-items: center; padding: 1px 0 0 9px; border-bottom: 1px solid #aaa; letter-spacing: -.1px; white-space: nowrap; }
.toolbar { height: 39px; flex: none; display: flex; align-items: center; padding-bottom: 2px; border-bottom: 1px solid #aaa; border-top: 1px solid #fff; }
.toolbar.second { height: 40px; border-bottom: 2px solid #b4b4b4; padding-bottom: 1px; }
.tool { width: 35px; height: 34px; flex: none; display: flex; align-items: center; justify-content: center; }
.tool svg { width: 24px; height: 24px; display: block; fill: none; overflow: visible; }
.tool.pressed { width: 33px; margin: 0 1px; background: linear-gradient(#d0d0d0, #dedede); border: 1px solid #999; border-radius: 3px; }
.grip { width: 6px; height: 30px; margin: 0 4px; flex: none; background: radial-gradient(circle at 1.5px 1.5px, #bbb 1px, transparent 1.3px) 0 0/6px 5px, radial-gradient(circle at 4.500px 4px, #c8c8c8 1px, transparent 1.300px) 0 0/6px 5px; }
.grip.first { margin: 0 0 0 5px; }
.drop { width: 0; height: 0; flex: none; border: 5px solid transparent; border-top-color: #000; border-bottom: 0; margin: 0 1px; }
.drop.dim { border-top-color: #999; }
.gray .i-abc { fill: #999; }
.i-one { font: bold 7.500px "DejaVu Sans"; fill: #777; letter-spacing: -.5px; }
.i-info { font: italic bold 15px "Liberation Serif"; fill: #fff; }
.i-t { font: 16px "DejaVu Serif"; fill: #333; }
.i-help { font: 15px "Liberation Serif"; fill: #fff; }
.i-abc { font: bold 8px "DejaVu Sans Condensed"; fill: #3d3a2a; }
.i-csw { font: bold 7.500px "DejaVu Sans Condensed"; fill: #555; }
.i-q { font: 600 13px "Open Sans"; fill: #111; }
.workspace { height: 524px; flex: none; display: flex; padding-left: 52px; }
.layers { width: 294px; margin-right: 7px; background: #fff; border: 1px solid #b5b5b5; border-left-width: 2px; border-radius: 0 0 3px 3px; display: flex; flex-direction: column; justify-content: flex-end; padding-bottom: 4px; }
.row { height: 16px; display: flex; align-items: center; font-size: 11px; letter-spacing: -.2px; }
.row b { letter-spacing: .2px; }
.twig { width: 43px; height: 16px; fill: none; stroke: #999; stroke-dasharray: 1 1; }
.twig.short { width: 22px; }
.check { width: 13px; height: 13px; border: 1px solid #bbb; border-radius: 2px; background: #f6f6f6; margin: 0 7px 0 1px; }
.swatch { width: 16px; height: 16px; margin-right: 5px; }
.row:not(.sub) .swatch { margin-right: 6px; margin-left: -1px; }
.swatch.middle { background: #beaed4; }
.swatch.old { background: #fdc086; }
.swatch.county { border: 1px solid #555; }
.swatch.pop { background: #ffffd4; border: 1px dotted #999; }
.mapframe { width: 927px; border: 1px solid #b5b5b5; border-radius: 3px; background: #fff; overflow: hidden; }
.map { display: block; width: 925px; height: 522px; }
.status { height: 31px; flex: none; display: flex; align-items: center; white-space: nowrap; letter-spacing: -.1px; padding-top: 1px; }
.hint { width: 447px; padding-left: 5px; }
.lbl-coord { width: 57px; margin-left: 5px; }
.field { display: flex; align-items: center; height: 21px; border: 1px solid #b5b5b5; border-radius: 3px; background: #fff; flex: none; }
.coord { width: 121px; justify-content: center; }
.bug { width: 17px; height: 18px; margin: 0 12px 0 4px; }
.lbl-scale { width: 30px; }
.scale { width: 89px; padding-left: 5px; letter-spacing: 0; }
.combo { margin-left: auto; border-left: 1px solid #b5b5b5; align-self: stretch; width: 16px; display: flex; align-items: center; justify-content: center; background: linear-gradient(#fafafa, #ddd); }
.combo .drop { margin: 0; border-left-width: 4px; border-right-width: 4px; border-top-width: 4px; }
.lock { width: 14px; height: 17px; margin: 0 14px 0 6px; }
.lbl-mag { width: 48px; }
.magn, .rot { width: 77px; padding-left: 5px; }
.spin { margin-left: auto; width: 16px; align-self: stretch; border-left: 1px solid #b5b5b5; display: flex; flex-direction: column; align-items: center; justify-content: space-around; background: linear-gradient(#f4f4f4 48%, #b5b5b5 48% 54%, #f4f4f4 54%); }
.spin b { margin: 0; border-width: 4px; }
.spin .drop { border-bottom: 0; }
.up { width: 0; height: 0; border: 4px solid transparent; border-bottom-color: #000; border-top: 0 !important; }
.lbl-rot { width: 43px; margin: 0 8px 0 8px; }
.render { width: 12px; height: 12px; margin: 0 5px 0 7px; }
.lbl-render { width: 38px; }
.globe { width: 16px; height: 16px; margin: 0 3px 0 15px; }
.lbl-epsg { width: 56px; }
.chat { width: 17px; height: 16px; margin-left: 19px; }
.taskbar { height: 40px; flex: none; background: #000; display: flex; color: #fff; }
.task { width: 47px; margin-right: 1px; height: 40px; display: flex; align-items: center; justify-content: center; }
.task svg { width: 24px; height: 24px; }
.open { width: 40px; margin-left: 6px; margin-right: 5px; border-bottom: 2px solid #a4d15c; }
.active { width: 48px; margin: 0; background: linear-gradient(90deg, #333 44px, #161616 44px 45px, #2b2b2b 45px); }
.tray { margin-left: auto; display: flex; align-items: center; }
.trayicons { width: 120px; height: 24px; }
.lang, .clock { font: 12px "Open Sans", sans-serif; letter-spacing: -.4px; }
.lang { width: 38px; padding-left: 4px; }
.clock { line-height: 17px; text-align: center; width: 65px; margin: 0 12px 2px 3px; }
.dialog { position: absolute; left: -40px; top: 107px; width: 743px; height: 472px; border: 1px solid #568f1c; background: #efefef; box-shadow: 2px 4px 16px rgba(0,0,0,.42); display: flex; flex-direction: column; }
.dtitle { height: 30px; flex: none; background: #fff; display: flex; align-items: center; justify-content: space-between; padding: 0 17px 0 34px; font: 11.500px "Open Sans", sans-serif; letter-spacing: -.12px; }
.dtitle span { padding-bottom: 2px; }
.dtitle svg { width: 70px; height: 30px; }
.dbody { flex: 1; padding: 11px 11px 11px 0; display: flex; flex-direction: column; }
.dtop { height: 37px; display: flex; justify-content: space-between; align-items: flex-start; }
.histogram { width: 104px; height: 23px; margin-top: 1px; border: 1px solid #aaa; border-radius: 3px; display: flex; background: linear-gradient(#fafafa, #ddd); align-items: center; justify-content: flex-end; letter-spacing: -.3px; }
.histogram i { width: 16px; margin-left: 21px; border-left: 1px solid #aaa; align-self: stretch; display: flex; align-items: center; justify-content: center; }
.histogram .drop { border-left-width: 4px; border-right-width: 4px; }
.btn { width: 75px; height: 23px; padding: 1px 0 0; border: 1px solid #b0b0b0; border-radius: 3px; background: linear-gradient(#fbfbfb, #dadada); font: inherit; display: flex; align-items: center; justify-content: center; box-shadow: inset 0 0 0 1px #fafafa; }
.btn.small { width: 38px; height: 26px; padding: 0; }
.btn.small svg { width: 16px; height: 16px; }
.dtop .btn.small svg { width: 24px; height: 18px; }
.btn em { font: 25px/16px "Liberation Serif"; color: #65436c; }
.default { border-color: #666; background: linear-gradient(#7fb8f0 2px, #e8edf4 2px, #cfd7e2 19px, #69a4e6 19px); box-shadow: none; }
.dmain { height: 347px; display: flex; font: 11.500px "Open Sans", sans-serif; }
.pages { width: 108px; margin: 0; padding: 2px 0; list-style: none; background: #fff; border: 1px solid #b4b4b4; border-radius: 3px; letter-spacing: -.1px; }
.pages li { height: 20px; line-height: 20px; padding-left: 27px; }
.pages .on { background: #efefef; }
.splitter { width: 3px; height: 32px; margin: 195px 1px 0 2px; background: radial-gradient(circle, #bbb 1px, transparent 1.300px) 0 0/3px 5px; }
.group { width: 616px; border: 1px solid #b4b4b4; border-radius: 3px; padding: 6px 7px 0; }
.gtitle, label { display: block; font: 11px/18px "DejaVu Sans Condensed", sans-serif; letter-spacing: -.18px; }
.cols { display: flex; }
.table { width: 271px; height: 288px; margin-top: 2px; background: #fff; border: 1px solid #aaa; border-radius: 3px; padding: 1px; display: flex; flex-direction: column; box-shadow: inset 0 0 0 1px #ddd; }
.thead { height: 23px; flex: none; display: flex; border: 1px solid #777; background: linear-gradient(#fafafa, #e0e0e0); line-height: 20px; }
.thead span { padding-left: 3px; flex: 1; }
.three { border-right: 0; }
.thead.three span { flex: none; width: 100px; border-right: 1px solid #777; }
.thead.three span:last-child { width: 67px; border: 0; }
.table p { margin: 0 0 0 3px; height: 15px; line-height: 14px; letter-spacing: .1px; }
.mid { width: 38px; margin: 108px 10px 0; display: flex; flex-direction: column; gap: 6px; }
.gap { margin-top: 3px; }
.trow { height: 15px; display: flex; line-height: 14px; letter-spacing: .1px; }
.trow span { width: 100px; flex: none; padding-left: 3px; }
.trow span:last-child { width: 66px; }
.trow i { width: 100px; flex: none; }
.c-young { background: #7fc97f; }
.c-mid { background: #beaed4; }
.c-old { background: #fdc086; }
.hscroll { margin-top: auto; height: 16px; display: flex; }
.sb { width: 16px; border: 1px solid #777; border-radius: 2px; background: linear-gradient(#fff, #ddd); display: flex; align-items: center; justify-content: center; }
.la, .ra { border: 4px solid transparent; border-right-color: #000; border-left: 0; }
.ra { border: 4px solid transparent; border-left-color: #000; border-right: 0; }
.thumb { width: 194px; border: 1px solid #777; background: linear-gradient(#fff, #e0e0e0); display: flex; align-items: center; justify-content: center; }
.thumb u { width: 19px; height: 12px; background: radial-gradient(circle, #aaa 1px, transparent 1.200px) 0 0/4px 4px; }
.track { flex: 1; border: 1px dotted #ddd; background: #f5f5f5; }
.actions { margin-top: 11px; display: flex; justify-content: flex-end; gap: 10px; }
```
